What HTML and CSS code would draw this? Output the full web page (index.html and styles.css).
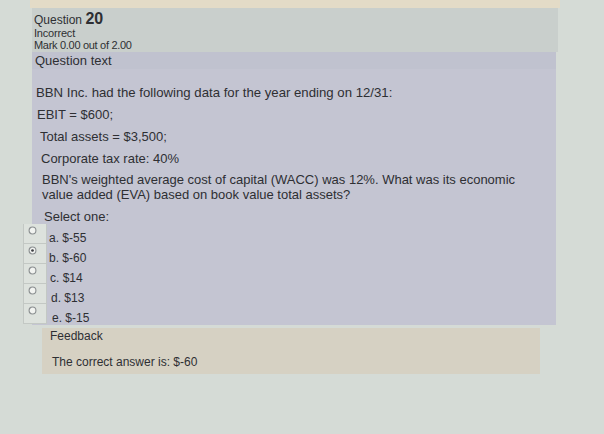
FILE: index.html
```html
<!DOCTYPE html>
<html>
<head>
<meta charset="utf-8">
<link rel="stylesheet" href="styles.css">
</head>
<body>
<div class="page">
  <div class="topband"></div>
  <div class="info">
    <div class="qno">Question <b>20</b></div>
    <div class="state">Incorrect</div>
    <div class="grade">Mark 0.00 out of 2.00</div>
  </div>
  <div class="qtext">
    <div class="qhead">Question text</div>
    <div class="body">
      <p class="p1">BBN Inc. had the following data for the year ending on 12/31:</p>
      <p class="p2">EBIT = $600;</p>
      <p class="p3">Total assets = $3,500;</p>
      <p class="p4">Corporate tax rate: 40%</p>
      <p class="p5">BBN's weighted average cost of capital (WACC) was 12%. What was its economic value added (EVA) based on book value total assets?</p>
      <div class="prompt">Select one:</div>
      <div class="answers">
        <div class="opt"><span class="cell"><svg class="radio" viewBox="0 0 10 10"><circle cx="5" cy="5" r="3.8"/></svg></span><span class="lbl">a. $-55</span></div>
        <div class="opt"><span class="cell"><svg class="radio" viewBox="0 0 10 10"><circle cx="5" cy="5" r="3.8"/><circle class="dot" cx="5" cy="5" r="1.5"/></svg></span><span class="lbl">b. $-60</span></div>
        <div class="opt"><span class="cell"><svg class="radio" viewBox="0 0 10 10"><circle cx="5" cy="5" r="3.8"/></svg></span><span class="lbl">c. $14</span></div>
        <div class="opt"><span class="cell"><svg class="radio" viewBox="0 0 10 10"><circle cx="5" cy="5" r="3.8"/></svg></span><span class="lbl">d. $13</span></div>
        <div class="opt"><span class="cell"><svg class="radio" viewBox="0 0 10 10"><circle cx="5" cy="5" r="3.8"/></svg></span><span class="lbl">e. $-15</span></div>
      </div>
    </div>
  </div>
  <div class="feedback">
    <div class="fhead">Feedback</div>
    <div class="ftext">The correct answer is: $-60</div>
  </div>
</div>
</body>
</html>
```

FILE: styles.css
```css
html, body {
  margin: 0;
  padding: 0;
}
body {
  background: #d5dbd6;
  width: 604px;
  height: 434px;
  overflow: hidden;
  font-family: "Liberation Sans", Arial, sans-serif;
  color: #2e2f33;
}
.page {
  display: flex;
  flex-direction: column;
}
.topband {
  height: 8px;
  margin-left: 30px;
  width: 530px;
  background: #e3dbc7;
}
.info {
  margin-left: 32px;
  width: 526px;
  height: 44px;
  background: #c9cfcc;
  padding-left: 2px;
  box-sizing: border-box;
}
.qno {
  font-size: 12px;
  line-height: 17px;
  padding-top: 2px;
}
.qno b {
  font-size: 16px;
}
.state {
  font-size: 11px;
  line-height: 11px;
  margin-top: -1px;
  letter-spacing: -0.2px;
}
.grade {
  font-size: 11px;
  line-height: 13px;
  letter-spacing: -0.3px;
}
.qtext {
  margin-left: 32px;
  width: 524px;
  height: 273px;
  background: #c4c5d2;
  box-sizing: border-box;
}
.qhead {
  font-size: 13px;
  line-height: 15px;
  padding-left: 3px;
  padding-top: 1px;
  height: 16px;
  background: #c0c2cf;
}
.body {
  padding-top: 16px;
  font-size: 13px;
}
.body p {
  margin: 0 0 7px 0;
  line-height: 15px;
}
.p1 { padding-left: 4px; font-size: 13.2px; }
.p2 { padding-left: 5px; }
.p3 { padding-left: 8px; }
.p4 { padding-left: 9px; margin-bottom: 6px !important; }
.p5 { padding-left: 10px; width: 490px; }
.prompt {
  padding-left: 12px;
  line-height: 15px;
  margin-top: 7px;
}
.answers {
  margin-left: -9px;
  margin-top: 0;
  display: flex;
  flex-direction: column;
}
.opt {
  display: flex;
  align-items: stretch;
  height: 20px;
}
.cell {
  width: 24px;
  background: #dde2dd;
  border: 1px solid #c3c8c4;
  border-top: none;
  display: flex;
  align-items: flex-start;
  padding-left: 4px;
  padding-top: 2px;
  box-sizing: border-box;
}
.radio {
  width: 9px;
  height: 9px;
}
.radio circle {
  fill: #f1f3f0;
  stroke: #8a8e90;
  stroke-width: 1.2;
}
.radio .dot {
  fill: #3a3c40;
  stroke: none;
}
.lbl {
  font-size: 12px;
  line-height: 20px;
  padding-top: 4px;
  padding-left: 2px;
}
.opt:nth-child(3) .lbl { padding-left: 3px; }
.opt:nth-child(4) .lbl { padding-left: 4px; }
.opt:nth-child(5) .lbl { padding-left: 5px; }
.feedback {
  margin-left: 42px;
  width: 498px;
  height: 46px;
  margin-top: 3px;
  background: #d6d1c3;
  box-sizing: border-box;
  padding-left: 8px;
}
.fhead {
  font-size: 12px;
  line-height: 14px;
  padding-top: 1px;
}
.ftext {
  font-size: 12px;
  line-height: 14px;
  margin-top: 12px;
  padding-left: 2px;
}
```
